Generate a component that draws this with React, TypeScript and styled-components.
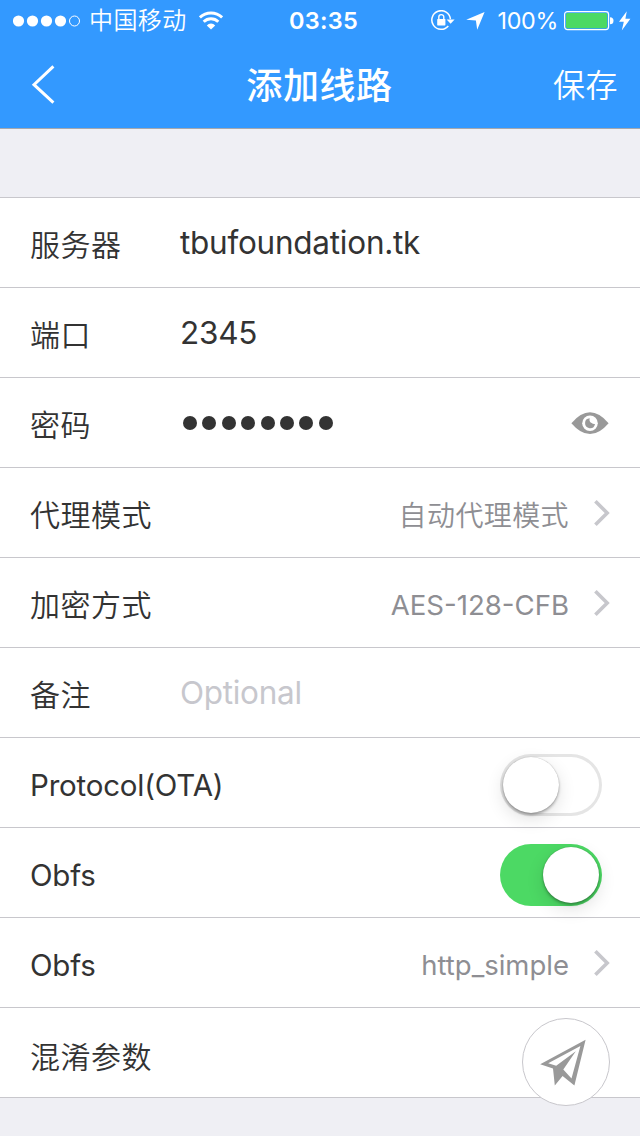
import React from "react";
import styled, { createGlobalStyle } from "styled-components";

const GlobalStyle = createGlobalStyle`
  * { box-sizing: border-box; }
  body {
    margin: 0;
    background: #efeff4;
    font-family: Inter, "Noto Sans CJK SC", sans-serif;
    color: #333;
  }
`;

const Screen = styled.main`
  width: 640px;
  height: 1136px;
  overflow: hidden;
  background: #efeff4;
`;

const Header = styled.header`
  height: 129px;
  background: #3399ff;
  border-bottom: 1px solid #a5a8ae;
  color: #fff;
`;

const StatusBar = styled.div`
  height: 41px;
  display: grid;
  grid-template-columns: 1fr auto 1fr;
  align-items: center;
  padding: 0 9px 0 13px;
`;

const StatusSide = styled.div<{ $end?: boolean }>`
  display: flex;
  align-items: center;
  justify-content: ${(p) => (p.$end ? "flex-end" : "flex-start")};
`;

const Text = styled.span<{ $size: number; $track?: number; $weight?: number; $color?: string; $drop?: number }>`
  font-size: ${(p) => p.$size}px;
  line-height: 40px;
  letter-spacing: ${(p) => p.$track ?? 0}px;
  font-weight: ${(p) => p.$weight ?? 400};
  color: ${(p) => p.$color ?? "inherit"};
  padding-top: ${(p) => Math.max(0, (p.$drop ?? 0) * 2)}px;
  padding-bottom: ${(p) => Math.max(0, -(p.$drop ?? 0) * 2)}px;
  white-space: nowrap;
`;

const Carrier = styled(Text)`
  margin: 0 12px 0 8px;
`;

const Clock = styled(Text)`
  padding-left: 3px;
`;

const Percent = styled(Text)`
  margin: 0 6px 0 11px;
`;

const NavBar = styled.nav`
  height: 87px;
  display: grid;
  grid-template-columns: 1fr auto 1fr;
  align-items: center;
  padding: 0 22px;
`;

const NavButton = styled.button<{ $end?: boolean }>`
  display: flex;
  align-items: center;
  justify-self: ${(p) => (p.$end ? "end" : "start")};
  padding: 0 0 ${(p) => (p.$end ? 0 : 2)}px ${(p) => (p.$end ? 0 : 8)}px;
  border: 0;
  background: none;
  color: inherit;
  font-family: inherit;
`;

const Heading = styled(Text)`
  padding-right: 1px;
`;

const List = styled.section`
  margin-top: 68px;
  border-top: 1px solid #c8c7cc;
`;

const Row = styled.div<{ $right?: number }>`
  height: 90px;
  display: flex;
  align-items: center;
  padding: 0 ${(p) => p.$right ?? 30}px 0 30px;
  background: #fff;
  border-bottom: 1px solid #c8c7cc;
`;

const Label = styled.div`
  display: flex;
  flex: 0 0 150px;
`;

const Field = styled.div`
  display: flex;
  flex: 1;
`;

const Trailing = styled.div`
  display: flex;
  align-items: center;
  margin-left: auto;
`;

const Dots = styled.div`
  display: flex;
  gap: 5.4px;
  padding-left: 3px;
  flex: 1;
`;

const Dot = styled.i`
  width: 14px;
  height: 14px;
  border-radius: 50%;
  background: #333;
`;

const Track = styled.div<{ $on?: boolean }>`
  width: 102px;
  height: 62px;
  display: flex;
  justify-content: ${(p) => (p.$on ? "flex-end" : "flex-start")};
  margin-top: 4px;
  padding: 3px;
  border-radius: 31px;
  background: ${(p) => (p.$on ? "#4cd964" : "#fff")};
  box-shadow: ${(p) => (p.$on ? "none" : "inset 0 0 0 3px #e5e5e5")};
`;

const Knob = styled.div`
  width: 56px;
  height: 56px;
  border-radius: 50%;
  background: #fff;
  box-shadow: 0 0 1px rgba(0, 0, 0, 0.3), 0 2px 3px rgba(0, 0, 0, 0.3), 0 6px 18px rgba(0, 0, 0, 0.12);
`;

const SendButton = styled.button`
  position: absolute;
  left: 522px;
  top: 1018px;
  width: 88px;
  height: 88px;
  padding: 0;
  border: 1px solid #c8c7cc;
  border-radius: 50%;
  background: #fff;
`;

const Signal = () => (
  <svg width="68" height="14" viewBox="0 0 68 14" fill="#fff">
    {[5.5, 19.5, 33.5, 47.5].map((x) => (
      <circle key={x} cx={x} cy="7" r="5.6" />
    ))}
    <circle cx="61.5" cy="7" r="5" fill="none" stroke="#fff" />
  </svg>
);

const Wifi = () => (
  <svg width="24" height="19" viewBox="0 0 24 19" fill="none" stroke="#fff" strokeWidth="2.9">
    <path d="M.9 6.5A15.8 15.8 0 0 1 23.1 6.5" />
    <path d="M4.7 10.7A10.4 10.4 0 0 1 19.3 10.7" />
    <path d="M12 18.6L7.8 14.4A5.8 5.8 0 0 1 16.2 14.4Z" fill="#fff" stroke="none" />
  </svg>
);

const LockSvg = styled.svg`
  margin-right: 11px;
`;

const RotationLock = () => (
  <LockSvg width="24" height="22" viewBox="0 0 24 22" fill="none" stroke="#fff">
    <path d="M17.3 15.9A9.3 9.3 0 1 1 19.4 9.2" strokeWidth="1.5" />
    <path d="M15.6 9.6h8L19.6 13.8z" fill="#fff" stroke="none" />
    <rect x="6.2" y="9" width="8.2" height="6.4" rx=".6" fill="#fff" stroke="none" />
    <path d="M7.8 10V7.1a2.5 2.5 0 0 1 5 0V10" strokeWidth="1.4" />
  </LockSvg>
);

const LocationArrow = () => (
  <svg width="20" height="18" viewBox="0 0 20 18" fill="#fff">
    <path d="M18.6 0L11.2 17.8L9.9 8.6L.2 7.7Z" />
  </svg>
);

const BatterySvg = styled.svg`
  margin-right: 5px;
`;

const Battery = () => (
  <BatterySvg width="50" height="20" viewBox="0 0 50 20">
    <rect x=".6" y=".6" width="44" height="18" rx="2.8" fill="none" stroke="#fff" strokeWidth="1.2" />
    <rect x="2" y="2" width="41.2" height="15.2" rx="1.6" fill="#4cd964" />
    <path d="M46 6.2a3.5 3.5 0 0 1 0 7z" fill="#fff" />
  </BatterySvg>
);

const Bolt = () => (
  <svg width="12" height="20" viewBox="0 0 12 20" fill="#fff">
    <path d="M7.8 .2L0 10.8H4.8L2.8 19.4L11.4 7.8H6.4Z" />
  </svg>
);

const Back = () => (
  <svg width="26" height="40" viewBox="0 0 26 40" fill="none" stroke="#fff" strokeWidth="3">
    <path d="M23.4 2.4L4 20.7L23.4 38.6" />
  </svg>
);

const Chevron = () => (
  <svg width="16" height="28" viewBox="0 0 16 28" fill="none" stroke="#c7c7cc" strokeWidth="3.6">
    <path d="M1.4 2.2L13.2 14L1.4 25.8" />
  </svg>
);

const EyeSvg = styled.svg`
  margin-right: 1px;
`;

const Eye = () => (
  <EyeSvg width="38" height="24" viewBox="0 0 38 24">
    <path d="M.4 12.2Q19 -9.6 37.6 12.2Q19 34 .4 12.2Z" fill="#999" />
    <circle cx="19" cy="12.2" r="7.8" fill="#fff" />
    <path d="M18.8 7.2A5 5 0 1 0 24 13A4.2 4.2 0 0 1 20.6 12.1A4 4 0 0 1 18.8 7.2Z" fill="#999" />
  </EyeSvg>
);

const Plane = () => (
  <svg width="86" height="86" viewBox="523 1019 86 86">
    <path fill="#999" d="M585.6 1039.8L540.2 1064.2L553 1068.6L554.8 1085.4L562.6 1076L574.4 1085.4Z" />
    <path fill="#fff" d="M580.4 1046.1L571.5 1078.4L563.3 1069.6L575.8 1051.2L556.2 1065.8L548.2 1063.2Z" />
  </svg>
);

const Title = (p: { children: string; drop?: number }) => {
  const latin = /^[\x00-\x7f]+$/.test(p.children);
  return (
    <Label>
      <Text $size={latin ? 29.5 : 30} $track={latin ? -0.2 : 0.5} $weight={latin ? 400 : 350} $drop={p.drop ?? 2}>
        {p.children}
      </Text>
    </Label>
  );
};

const Choice = styled(Text)`
  margin-right: 25px;
`;

const LinkRow = (p: { label: string; value: string; size: number; track?: number; weight?: number; drop: number }) => (
  <Row>
    <Title>{p.label}</Title>
    <Trailing>
      <Choice $size={p.size} $track={p.track} $weight={p.weight} $color="#8e8e93" $drop={p.drop}>{p.value}</Choice>
      <Chevron />
    </Trailing>
  </Row>
);

export default function App() {
  return (
    <Screen>
      <GlobalStyle />
      <Header>
        <StatusBar>
          <StatusSide>
            <Signal />
            <Carrier $size={24} $track={0.4} $weight={350} $drop={0.5}>中国移动</Carrier>
            <Wifi />
          </StatusSide>
          <Clock $size={23.5} $track={0.3} $weight={600}>03:35</Clock>
          <StatusSide $end>
            <RotationLock />
            <LocationArrow />
            <Percent $size={23.3} $track={-0.3}>100%</Percent>
            <Battery />
            <Bolt />
          </StatusSide>
        </StatusBar>
        <NavBar>
          <NavButton aria-label="返回"><Back /></NavButton>
          <Heading $size={36} $track={0.6} $weight={500} $drop={1.5}>添加线路</Heading>
          <NavButton $end><Text $size={32} $track={0.5} $weight={350} $drop={1}>保存</Text></NavButton>
        </NavBar>
      </Header>
      <List>
        <Row>
          <Title>服务器</Title>
          <Field><Text $size={31.5} $track={-0.25}>tbufoundation.tk</Text></Field>
        </Row>
        <Row>
          <Title>端口</Title>
          <Field><Text $size={31.5} $track={-0.25}>2345</Text></Field>
        </Row>
        <Row>
          <Title>密码</Title>
          <Dots>{Array.from({ length: 8 }, (_, i) => <Dot key={i} />)}</Dots>
          <Eye />
        </Row>
        <LinkRow label="代理模式" value="自动代理模式" size={28} track={0.4} weight={350} drop={3} />
        <LinkRow label="加密方式" value="AES-128-CFB" size={27.6} drop={2.5} />
        <Row>
          <Title>备注</Title>
          <Field><Text $size={31.5} $track={-0.3} $color="#c7c7cd">Optional</Text></Field>
        </Row>
        <Row $right={38}>
          <Title>Protocol(OTA)</Title>
          <Trailing><Track><Knob /></Track></Trailing>
        </Row>
        <Row $right={38}>
          <Title>Obfs</Title>
          <Trailing><Track $on><Knob /></Track></Trailing>
        </Row>
        <LinkRow label="Obfs" value="http_simple" size={27.5} drop={2.5} />
        <Row>
          <Title drop={4}>混淆参数</Title>
        </Row>
      </List>
      <SendButton aria-label="发送"><Plane /></SendButton>
    </Screen>
  );
}
